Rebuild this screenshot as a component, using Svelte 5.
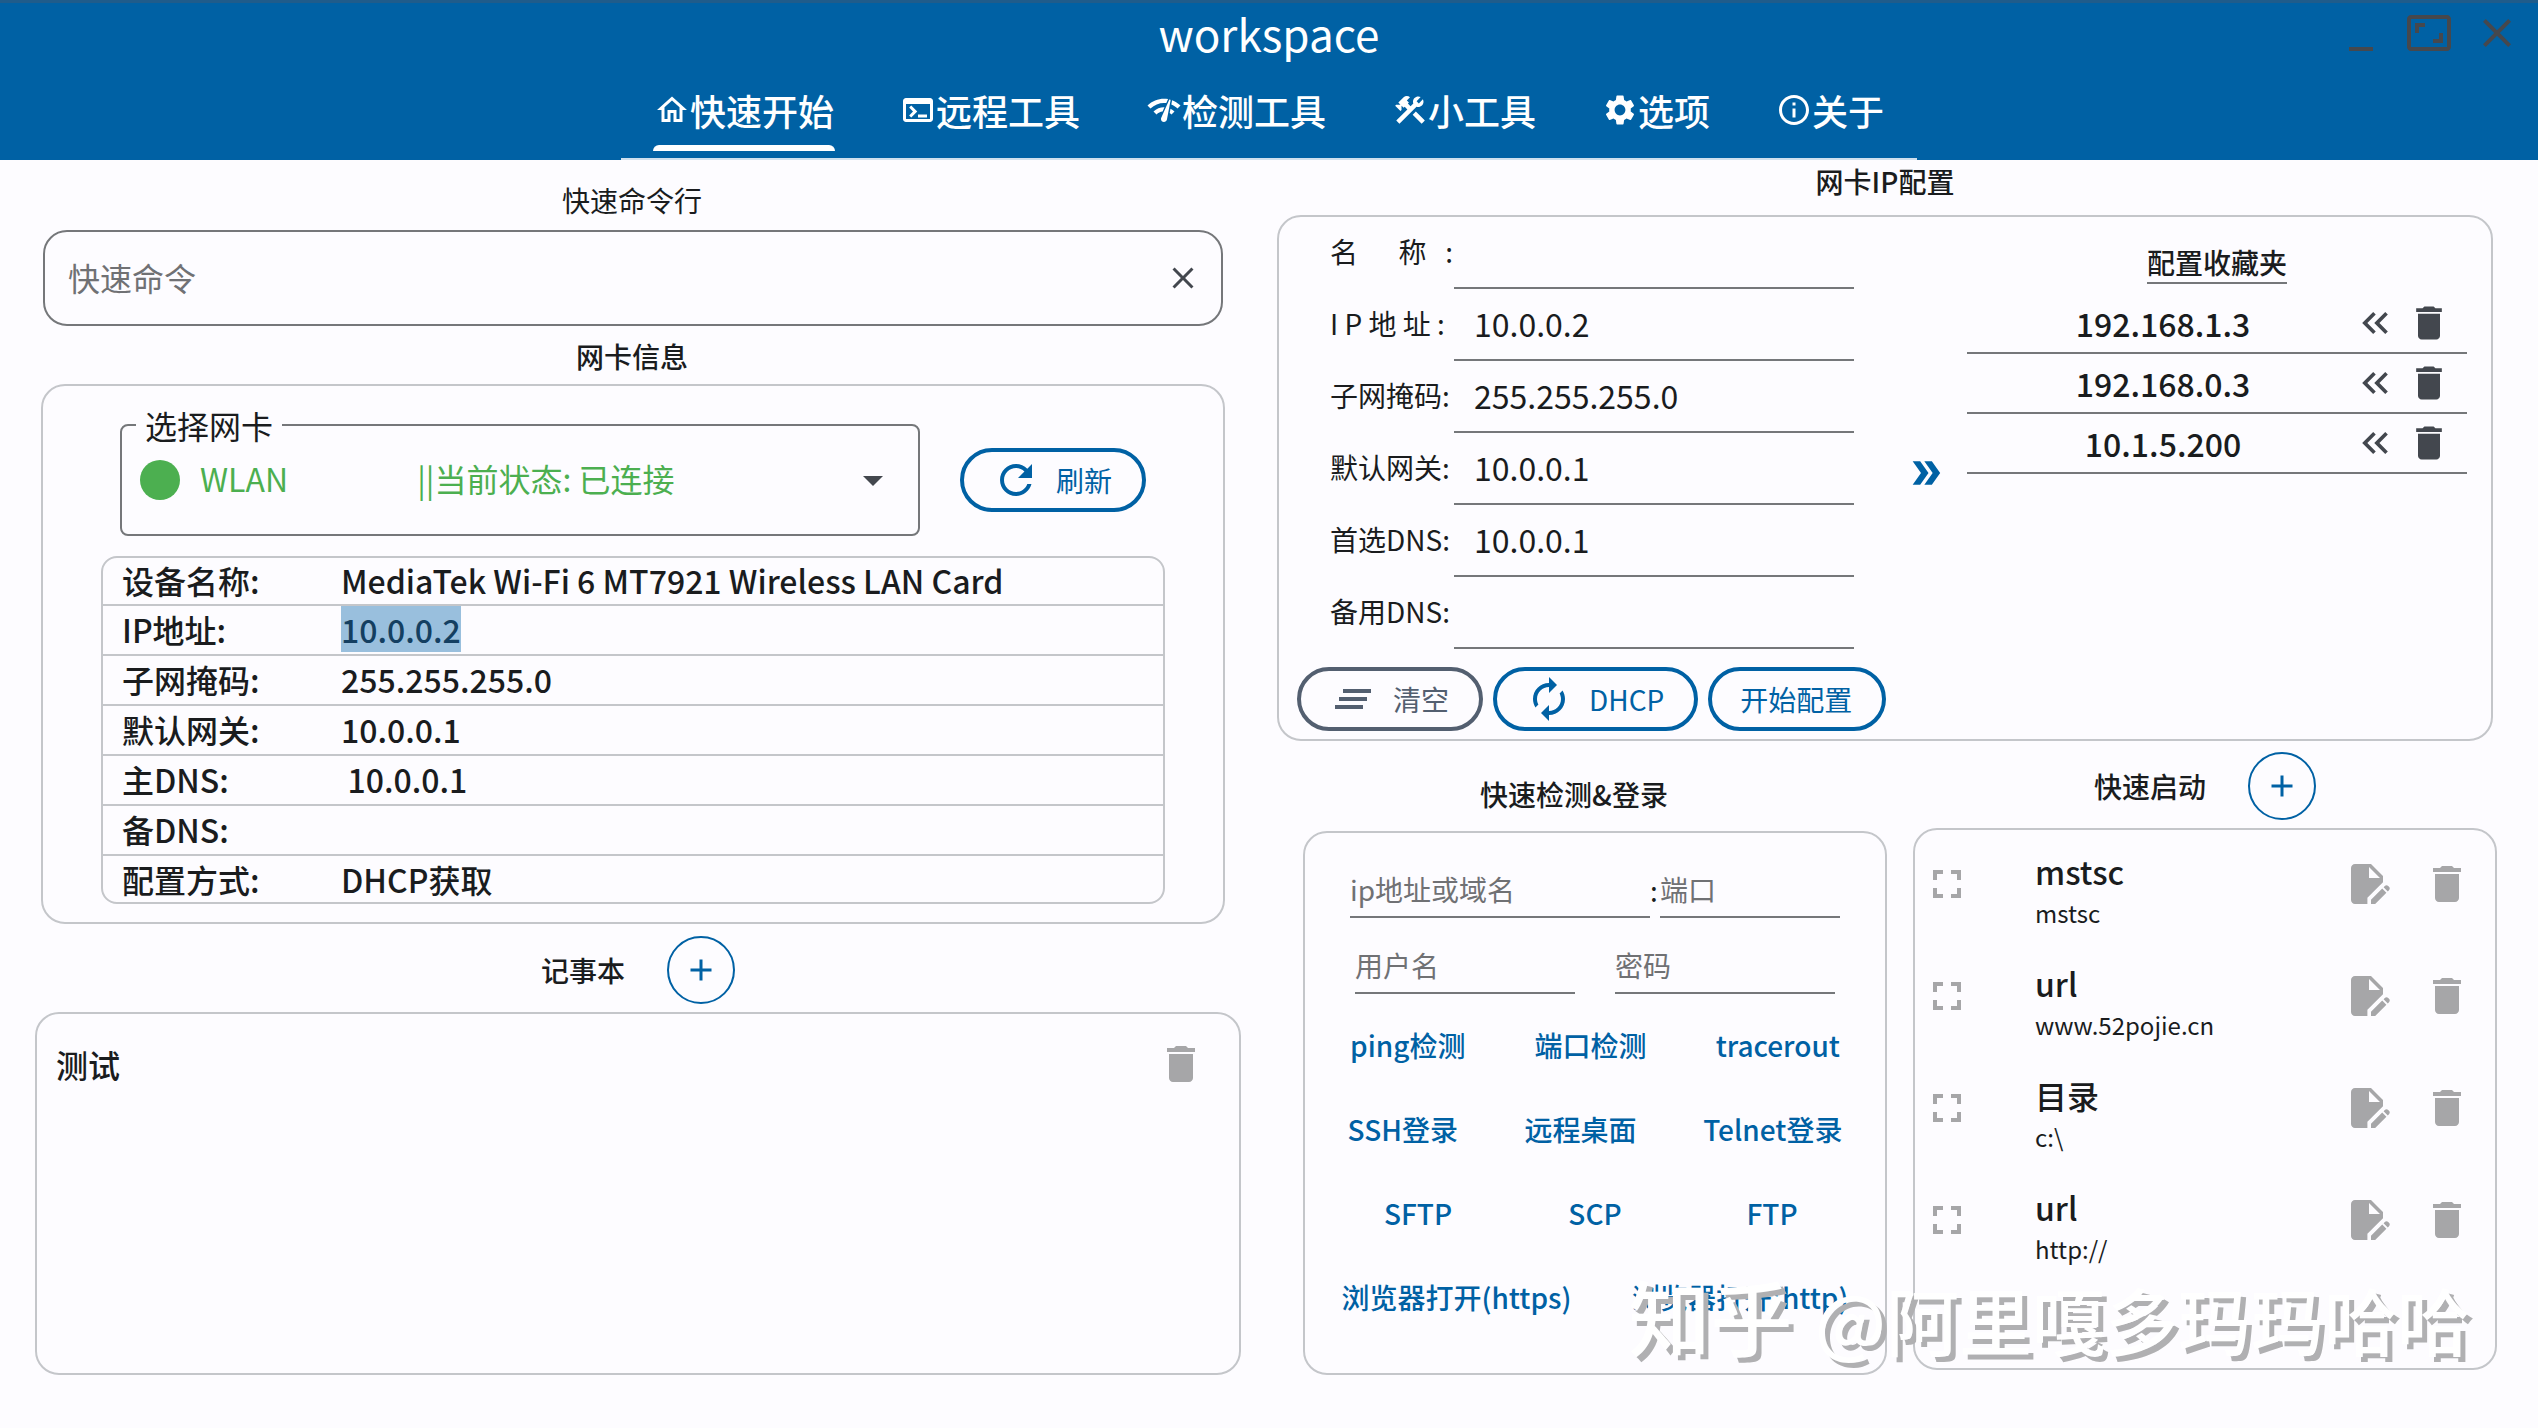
<script>
    const icons = {
        home: "M12 5.69l5 4.5V18h-2v-6H9v6H7v-7.81l5-4.5M12 3L2 12h3v8h6v-6h2v6h6v-8h3L12 3z",
        terminal: "M20 4H4c-1.11 0-2 .9-2 2v12c0 1.1.89 2 2 2h16c1.1 0 2-.9 2-2V6c0-1.1-.89-2-2-2zm0 14H4V8h16v10zm-2-1h-6v-2h6v2zM7.5 17l-1.41-1.41L8.67 13l-2.59-2.59L7.5 9l4 4-4 4z",
        network: "M15.9 5c-.17 0-.32.09-.41.23l-.07.15-5.18 11.65c-.16.29-.26.61-.26.96 0 1.11.9 2.01 2.01 2.01.96 0 1.77-.68 1.96-1.59l.01-.03L16.4 5.5c0-.28-.22-.5-.5-.5zM1 9l2 2c2.88-2.88 6.79-4.08 10.53-3.62l1.19-2.68C9.89 3.84 4.74 5.27 1 9zm20 2l2-2c-1.64-1.64-3.55-2.82-5.59-3.57l-.53 2.82c1.5.62 2.9 1.53 4.12 2.75zm-4 4l2-2c-.8-.8-1.7-1.42-2.66-1.89l-.55 2.92c.42.27.83.59 1.21.97zM5 13l2 2c1.13-1.13 2.56-1.79 4.03-2l1.28-2.88c-2.63-.08-5.3.87-7.31 2.88z",
        build: "M13.78 15.17l2.12-2.12 6 6-2.12 2.12zM17.5 10c1.93 0 3.5-1.57 3.5-3.5 0-.58-.16-1.12-.41-1.6l-2.7 2.7-1.49-1.49 2.7-2.7c-.48-.25-1.02-.41-1.6-.41C15.57 3 14 4.57 14 6.5c0 .41.08.8.21 1.16l-1.85 1.85-1.78-1.78.71-.71-1.41-1.41L12 3.49c-1.17-1.17-3.07-1.17-4.24 0L4.22 7.03l1.41 1.41H2.81l-.71.71 3.54 3.54.71-.71V9.15l1.41 1.41.71-.71 1.78 1.78-7.41 7.41 2.12 2.12L16.34 9.79c.36.13.75.21 1.16.21z",
        settings: "M19.14 12.94c.04-.3.06-.61.06-.94 0-.32-.02-.64-.07-.94l2.03-1.58c.18-.14.23-.41.12-.61l-1.92-3.32c-.12-.22-.37-.29-.59-.22l-2.39.96c-.5-.38-1.03-.7-1.62-.94l-.36-2.54c-.04-.24-.24-.41-.48-.41h-3.84c-.24 0-.43.17-.47.41l-.36 2.54c-.59.24-1.13.57-1.62.94l-2.39-.96c-.22-.08-.47 0-.59.22L2.74 8.87c-.12.21-.08.47.12.61l2.03 1.58c-.05.3-.09.63-.09.94s.02.64.07.94l-2.03 1.58c-.18.14-.23.41-.12.61l1.92 3.32c.12.22.37.29.59.22l2.39-.96c.5.38 1.03.7 1.62.94l.36 2.54c.05.24.24.41.48.41h3.84c.24 0 .44-.17.47-.41l.36-2.54c.59-.24 1.13-.56 1.62-.94l2.39.96c.22.08.47 0 .59-.22l1.92-3.32c.12-.22.07-.47-.12-.61l-2.01-1.58zM12 15.6c-1.98 0-3.6-1.62-3.6-3.6s1.62-3.6 3.6-3.6 3.6 1.62 3.6 3.6-1.62 3.6-3.6 3.6z",
        info: "M11 7h2v2h-2zm0 4h2v6h-2zm1-9C6.48 2 2 6.48 2 12s4.48 10 10 10 10-4.48 10-10S17.52 2 12 2zm0 18c-4.41 0-8-3.59-8-8s3.59-8 8-8 8 3.59 8 8-3.59 8-8 8z",
        minimize: "M6 19h12v2H6z",
        aspect: "M19 12h-2v3h-3v2h5v-5zM7 9h3V7H5v5h2V9zm14-6H3c-1.1 0-2 .9-2 2v14c0 1.1.9 2 2 2h18c1.1 0 2-.9 2-2V5c0-1.1-.9-2-2-2zm0 16.01H3V4.99h18v14.02z",
        close: "M19 6.41L17.59 5 12 10.59 6.41 5 5 6.41 10.59 12 5 17.59 6.41 19 12 13.41 17.59 19 19 17.59 13.41 12z",
        arrowDown: "M7 10l5 5 5-5z",
        refresh: "M17.65 6.35C16.2 4.9 14.21 4 12 4c-4.42 0-7.99 3.58-7.99 8s3.57 8 7.99 8c3.73 0 6.84-2.55 7.73-6h-2.08c-.82 2.33-3.04 4-5.65 4-3.31 0-6-2.69-6-6s2.69-6 6-6c1.66 0 3.14.69 4.22 1.78L13 11h7V4l-2.35 2.35z",
        clearAll: "M5 13h14v-2H5v2zm-2 4h14v-2H3v2zM7 7v2h14V7H7z",
        renew: "M12 6v3l4-4-4-4v3c-4.42 0-8 3.58-8 8 0 1.57.46 3.03 1.24 4.26L6.7 14.8c-.45-.83-.7-1.79-.7-2.8 0-3.31 2.69-6 6-6zm6.76 1.74L17.3 9.2c.44.84.7 1.79.7 2.8 0 3.31-2.69 6-6 6v-3l-4 4 4 4v-3c4.42 0 8-3.58 8-8 0-1.57-.46-3.03-1.24-4.26z",
        doubleRight: "M15.5 5H11l5 7-5 7h4.5l5-7zM8.5 5H4l5 7-5 7h4.5l5-7z",
        doubleLeft: "M17.59 18L19 16.59 14.42 12 19 7.41 17.59 6l-6 6zM11 18l1.41-1.41L7.83 12l4.58-4.59L11 6l-6 6z",
        trash: "M6 19c0 1.1.9 2 2 2h8c1.1 0 2-.9 2-2V7H6v12zM19 4h-3.5l-1-1h-5l-1 1H5v2h14V4z",
        add: "M19 13h-6v6h-2v-6H5v-2h6V5h2v6h6v2z",
        fullscreen: "M7 14H5v5h5v-2H7v-3zm-2-4h2V7h3V5H5v5zm12 7h-3v2h5v-5h-2v3zM14 5v2h3v3h2V5h-5z",
        editDoc: "M6 2c-1.1 0-2 .9-2 2v16c0 1.1.9 2 2 2h6.2v-3.1l7.8-7.8V8l-6-6H6zm7 7V3.5L18.5 9H13zM14 22v-2.1l5.6-5.6 2.1 2.1L16.1 22zM22.4 15.7l-2.1-2.1.6-.6c.5-.5 1.2-.5 1.7 0l.4.4c.5.5.5 1.2 0 1.7z",
    };

    const tabs = [
        { icon: "home", name: "快速开始" },
        { icon: "terminal", name: "远程工具" },
        { icon: "network", name: "检测工具" },
        { icon: "build", name: "小工具" },
        { icon: "settings", name: "选项" },
        { icon: "info", name: "关于" },
    ];
    let active = $state(0);

    const card = [
        ["设备名称:", "MediaTek Wi-Fi 6 MT7921 Wireless LAN Card"],
        ["IP地址:", "10.0.0.2"],
        ["子网掩码:", "255.255.255.0"],
        ["默认网关:", "10.0.0.1"],
        ["主DNS:", "\u200910.0.0.1"],
        ["备DNS:", ""],
        ["配置方式:", "DHCP获取"],
    ];
    const selectedRow = 1;
    const adapter = "WLAN" + "\u00a0".repeat(18) + "||当前状态: 已连接";

    let fields = $state([
        { label: "名\u3000  称   :", value: "" },
        { label: "I P 地 址 :", value: "10.0.0.2" },
        { label: "子网掩码:", value: "255.255.255.0" },
        { label: "默认网关:", value: "10.0.0.1" },
        { label: "首选DNS:", value: "10.0.0.1" },
        { label: "备用DNS:", value: "" },
    ]);

    let favorites = $state(["192.168.1.3", "192.168.0.3", "10.1.5.200"]);

    const actions = [
        ["ping检测", "端口检测", "tracerout"],
        ["SSH登录", "远程桌面", "Telnet登录"],
        ["SFTP", "SCP", "FTP"],
        ["浏览器打开(https)", "浏览器打开(http)"],
    ];

    let shortcuts = $state([
        { name: "mstsc", path: "mstsc" },
        { name: "url", path: "www.52pojie.cn" },
        { name: "目录", path: "c:\\" },
        { name: "url", path: "http://" },
    ]);

    let notes = $state(["测试"]);
    let command = $state("");

    function clearFields() {
        fields.forEach((f) => (f.value = ""));
    }
</script>

{#snippet icon(name)}
    <svg class="icon" viewBox="0 0 24 24" aria-hidden="true"><path d={icons[name]} /></svg>
{/snippet}

<div class="app">
    <header>
        <div class="titlebar">
            <h1>workspace</h1>
            <div class="window-buttons">
                <button aria-label="最小化">{@render icon("minimize")}</button>
                <button aria-label="最大化">{@render icon("aspect")}</button>
                <button aria-label="关闭">{@render icon("close")}</button>
            </div>
        </div>
        <nav>
            {#each tabs as tab, i}
                <button class="tab" onclick={() => (active = i)}>
                    <span class="tab-label" class:active={active === i}>{@render icon(tab.icon)}{tab.name}</span>
                </button>
            {/each}
        </nav>
    </header>

    <main>
        <div class="left">
            <label class="title command-title" for="command">快速命令行</label>
            <div class="command">
                <input id="command" placeholder="快速命令" bind:value={command} />
                <button aria-label="清除" onclick={() => (command = "")}>{@render icon("close")}</button>
            </div>

            <h2 class="title medium info-title">网卡信息</h2>
            <section class="card info">
                <div class="adapter-row">
                    <fieldset>
                        <legend><label for="adapter">选择网卡</label></legend>
                        <div class="adapter">
                            <span class="dot"></span>
                            <select id="adapter"><option>{adapter}</option></select>
                            {@render icon("arrowDown")}
                        </div>
                    </fieldset>
                    <button class="pill">{@render icon("refresh")}刷新</button>
                </div>
                <div class="table-box">
                    <table>
                        <tbody>
                            {#each card as [key, value], i}
                                <tr>
                                    <th scope="row">{key}</th>
                                    <td><span class:selected={i === selectedRow}>{value}</span></td>
                                </tr>
                            {/each}
                        </tbody>
                    </table>
                </div>
            </section>

            <div class="title-row notes-title">
                <h2 class="title medium">记事本</h2>
                <button class="round" aria-label="添加记事">{@render icon("add")}</button>
            </div>
            <section class="card notes">
                {#each notes as note, i}
                    <div class="note">
                        <span>{note}</span>
                        <button class="gray" aria-label="删除" onclick={() => notes.splice(i, 1)}>{@render icon("trash")}</button>
                    </div>
                {/each}
            </section>
        </div>

        <div class="right">
            <h2 class="title medium ip-title">网卡IP配置</h2>
            <section class="card ip">
                <div class="form">
                    {#each fields as field, i}
                        <div class="field">
                            <label for="field-{i}">{field.label}</label>
                            <input id="field-{i}" class="line" bind:value={field.value} />
                        </div>
                    {/each}
                    <div class="buttons">
                        <button class="pill slate" onclick={clearFields}>{@render icon("clearAll")}清空</button>
                        <button class="pill">{@render icon("renew")}DHCP</button>
                        <button class="pill">开始配置</button>
                    </div>
                </div>
                <button class="save" aria-label="收藏">{@render icon("doubleRight")}</button>
                <div class="favorites">
                    <h3>配置收藏夹</h3>
                    <ul>
                        {#each favorites as ip, i}
                            <li>
                                <span>{ip}</span>
                                <button aria-label="载入">{@render icon("doubleLeft")}</button>
                                <button aria-label="删除" onclick={() => favorites.splice(i, 1)}>{@render icon("trash")}</button>
                            </li>
                        {/each}
                    </ul>
                </div>
            </section>

            <div class="bottom">
                <div class="column">
                    <div class="title-row check-title">
                        <h2 class="title medium">快速检测&amp;登录</h2>
                    </div>
                    <section class="card check">
                        <div class="inputs">
                            <input class="line host" placeholder="ip地址或域名" aria-label="ip地址或域名" />
                            <span>:</span>
                            <input class="line port" placeholder="端口" aria-label="端口" />
                        </div>
                        <div class="inputs login">
                            <input class="line" placeholder="用户名" aria-label="用户名" />
                            <input class="line" type="password" placeholder="密码" aria-label="密码" />
                        </div>
                        {#each actions as row}
                            <div class="actions">
                                {#each row as action}
                                    <button>{action}</button>
                                {/each}
                            </div>
                        {/each}
                    </section>
                </div>

                <div class="column">
                    <div class="title-row">
                        <h2 class="title medium">快速启动</h2>
                        <button class="round" aria-label="添加启动项">{@render icon("add")}</button>
                    </div>
                    <section class="card launch">
                        {#each shortcuts as item, i}
                            <div class="shortcut">
                                <button class="gray" aria-label="打开">{@render icon("fullscreen")}</button>
                                <div class="text">
                                    <div class="name">{item.name}</div>
                                    <div class="path">{item.path}</div>
                                </div>
                                <button class="gray" aria-label="编辑">{@render icon("editDoc")}</button>
                                <button class="gray" aria-label="删除" onclick={() => shortcuts.splice(i, 1)}>{@render icon("trash")}</button>
                            </div>
                        {/each}
                    </section>
                </div>
            </div>
        </div>
    </main>

    <div class="watermark"><span class="brand">知乎</span> @阿里嘎多玛玛哈哈</div>
</div>

<style>
    :global(body) {
        background: #fdfcff;
    }

    .app {
        position: relative;
        min-height: 100vh;
        background: #fdfcff;
        color: #1a1c1e;
        font-family: "Noto Sans CJK SC", "Noto Sans", sans-serif;
        font-size: 32px;
        line-height: 48px;
    }

    .app :global(*) {
        box-sizing: border-box;
    }

    button, input, select {
        font: inherit;
        color: inherit;
        background: none;
        border: none;
        outline: none;
        margin: 0;
        padding: 0;
    }

    button {
        cursor: pointer;
    }

    h1, h2, h3, ul {
        margin: 0;
        padding: 0;
        font-weight: 400;
        list-style: none;
    }

    .icon {
        display: block;
        flex: none;
        width: 48px;
        height: 48px;
        fill: currentColor;
    }

    header {
        height: 160px;
        background: #0061a4;
        border-top: 3px solid #1f5c8b;
        color: #fff;
        display: flex;
        flex-direction: column;
        justify-content: space-between;
        align-items: center;
    }

    .titlebar {
        width: 100%;
        display: grid;
        grid-template-columns: 1fr auto 1fr;
        align-items: center;
        padding: 0 17px;
    }

    h1 {
        grid-column: 2;
        font-size: 44px;
        line-height: 60px;
    }

    .window-buttons {
        display: flex;
        justify-content: flex-end;
        gap: 20px;
        color: #46484d;
    }

    nav {
        display: flex;
        border-bottom: 2px solid #cfe0ee;
    }

    .tab {
        padding: 0 32px;
    }

    .tab-label {
        display: flex;
        align-items: center;
        height: 82px;
        margin-bottom: 7px;
        padding: 0 1px;
        font-size: 36px;
        font-weight: 500;
        position: relative;
    }

    .tab-label .icon {
        width: 36px;
        height: 36px;
    }

    .tab-label.active::after {
        content: "";
        position: absolute;
        left: 0;
        right: 0;
        bottom: 0;
        height: 6px;
        border-radius: 6px 6px 0 0;
        background: #fff;
    }

    main {
        display: grid;
        grid-template-columns: 1fr 1fr;
    }

    .left, .right, .column {
        display: flex;
        flex-direction: column;
        min-width: 0;
    }

    .title {
        font-size: 28px;
        line-height: 42px;
        text-align: center;
    }

    .medium {
        font-weight: 500;
    }

    .title-row {
        display: flex;
        justify-content: center;
        align-items: center;
        gap: 42px;
        height: 68px;
        margin-bottom: 8px;
    }

    .round {
        display: flex;
        align-items: center;
        justify-content: center;
        width: 68px;
        height: 68px;
        border: 2px solid #0061a4;
        border-radius: 50%;
        color: #0061a4;
    }

    .round .icon {
        width: 36px;
        height: 36px;
    }

    .card {
        border: 2px solid #c4c6ca;
        border-radius: 24px;
    }

    .command-title {
        margin: 19px 5px 9px 0;
    }

    .command {
        display: flex;
        align-items: center;
        height: 96px;
        margin: 0 46px 0 43px;
        padding: 0 20px 0 23px;
        border: 2px solid #75777a;
        border-radius: 24px;
    }

    .command input {
        flex: 1;
        min-width: 0;
        padding-bottom: 2px;
    }

    input::placeholder {
        color: #707174;
        opacity: 1;
    }

    .command .icon {
        width: 36px;
        height: 36px;
        color: #43474e;
    }

    .info-title {
        margin: 9px 5px 7px 0;
    }

    .info {
        margin: 0 44px 0 41px;
        padding: 18px 58px;
    }

    .adapter-row {
        display: flex;
        align-items: center;
        gap: 40px;
        padding: 0 0 20px 19px;
    }

    fieldset {
        flex: 0 1 800px;
        min-width: 0;
        margin: 0;
        padding: 0 14px 29px;
        border: 2px solid #75777a;
        border-radius: 8px;
    }

    legend {
        padding: 0 9px;
        line-height: 42px;
    }

    .adapter {
        display: flex;
        align-items: center;
        gap: 20px;
        padding: 9px 7px 0 4px;
        height: 59px;
    }

    .dot {
        flex: none;
        width: 40px;
        height: 40px;
        border-radius: 50%;
        background: #4caf50;
    }

    select {
        appearance: none;
        flex: 1;
        min-width: 0;
        padding-bottom: 4px;
        color: #4caf50;
    }

    .adapter .icon {
        color: #43474e;
    }

    .pill {
        display: flex;
        align-items: center;
        gap: 16px;
        height: 64px;
        padding: 0 30px 0 28px;
        border: 4px solid #0061a4;
        border-radius: 32px;
        color: #0061a4;
        font-size: 28px;
        white-space: nowrap;
    }

    .adapter-row .pill {
        margin-top: 20px;
    }

    .pill.slate {
        color: #535f70;
        border-color: #535f70;
    }

    .table-box {
        border: 2px solid #c4c6ca;
        border-radius: 16px;
        overflow: hidden;
    }

    table {
        width: 100%;
        border-collapse: separate;
        border-spacing: 0;
        line-height: 46px;
    }

    th, td {
        height: 50px;
        padding: 0;
        font-weight: 500;
        text-align: left;
        vertical-align: top;
        border-bottom: 2px solid #c4c6ca;
    }

    tr:first-child > * {
        height: 48px;
        line-height: 44px;
    }

    tr:last-child > * {
        height: 46px;
        border-bottom: none;
    }

    th {
        width: 238px;
        padding-left: 19px;
    }

    .selected {
        display: inline-block;
        background: #99bfdd;
        color: #143f61;
    }

    .notes-title {
        margin: 12px 28px 8px 35px;
    }

    .notes {
        flex: 1;
        margin: 0 28px 0 35px;
        padding: 26px 34px 0 19px;
    }

    .note {
        display: flex;
        align-items: center;
        justify-content: space-between;
        font-weight: 500;
    }

    .gray {
        color: #a6a6a8;
    }

    .ip-title {
        margin: 0 45px 13px 8px;
    }

    .ip {
        display: flex;
        align-items: flex-start;
        margin: 0 45px 0 8px;
        height: 526px;
    }

    .form {
        flex: 0 1 auto;
    }

    .field {
        display: flex;
        align-items: center;
        height: 72px;
        padding-left: 51px;
    }

    .field label {
        min-width: 124px;
        padding-bottom: 4px;
        font-size: 28px;
        white-space: pre;
    }

    .line {
        padding-bottom: 2px;
        border-bottom: 2px solid #75777a;
    }

    .field input {
        width: 400px;
        height: 72px;
        padding-left: 20px;
    }

    .buttons {
        display: flex;
        gap: 10px;
        padding: 18px 0 0 18px;
    }

    .save {
        align-self: center;
        color: #0061a4;
        margin: 0 18px 10px 20px;
    }

    .save .icon {
        width: 40px;
        height: 40px;
    }

    .favorites {
        flex: 1;
        max-width: 500px;
        margin-left: auto;
        margin-right: 24px;
        padding-top: 25px;
        text-align: center;
    }

    h3 {
        width: fit-content;
        margin: 0 auto;
        font-size: 28px;
        line-height: 40px;
        font-weight: 500;
        border-bottom: 2px solid #75777a;
    }

    .favorites ul {
        margin-top: 10px;
    }

    .favorites li {
        display: flex;
        align-items: center;
        gap: 10px;
        height: 60px;
        padding: 0 16px;
        border-bottom: 2px solid #75777a;
        font-weight: 500;
    }

    .favorites li span {
        flex: 1;
    }

    .favorites .icon {
        width: 44px;
        height: 44px;
        color: #43474e;
    }

    .bottom {
        display: grid;
        grid-template-columns: 1fr 1fr;
        gap: 26px;
        margin: 11px 41px 0 34px;
    }

    .check-title {
        height: 71px;
        padding: 12px 42px 0 0;
    }

    .check {
        flex: 1;
        min-height: 544px;
        padding-top: 31px;
        font-size: 28px;
    }

    .inputs {
        display: flex;
        justify-content: center;
        margin-bottom: 22px;
    }

    .inputs span {
        width: 10px;
        line-height: 52px;
    }

    .inputs input {
        width: 220px;
        height: 54px;
    }

    .inputs .host {
        width: 300px;
    }

    .inputs .port {
        width: 180px;
    }

    .login {
        gap: 40px;
    }

    .actions {
        display: flex;
        justify-content: space-evenly;
        margin-bottom: 20px;
    }

    .actions button {
        min-width: 128px;
        height: 64px;
        padding: 0 24px 6px;
        color: #0061a4;
        font-weight: 500;
    }

    .launch {
        min-height: 542px;
    }

    .shortcut {
        display: flex;
        align-items: flex-start;
        height: 112px;
        padding: 30px 24px 0 8px;
    }

    .shortcut .text {
        flex: 1;
        margin: -13px 0 0 64px;
    }

    .shortcut .name {
        font-weight: 500;
    }

    .shortcut .path {
        font-size: 24px;
        line-height: 36px;
    }

    .shortcut .gray + .gray {
        margin-left: 32px;
    }

    .watermark {
        position: absolute;
        right: 68px;
        bottom: 62px;
        font-size: 73px;
        font-weight: 500;
        line-height: 96px;
        color: #fff;
        text-shadow: 5px 5px 0 #b0b0b2;
        white-space: nowrap;
        pointer-events: none;
    }

    .brand {
        margin-right: 6px;
        font-size: 82px;
    }
</style>
